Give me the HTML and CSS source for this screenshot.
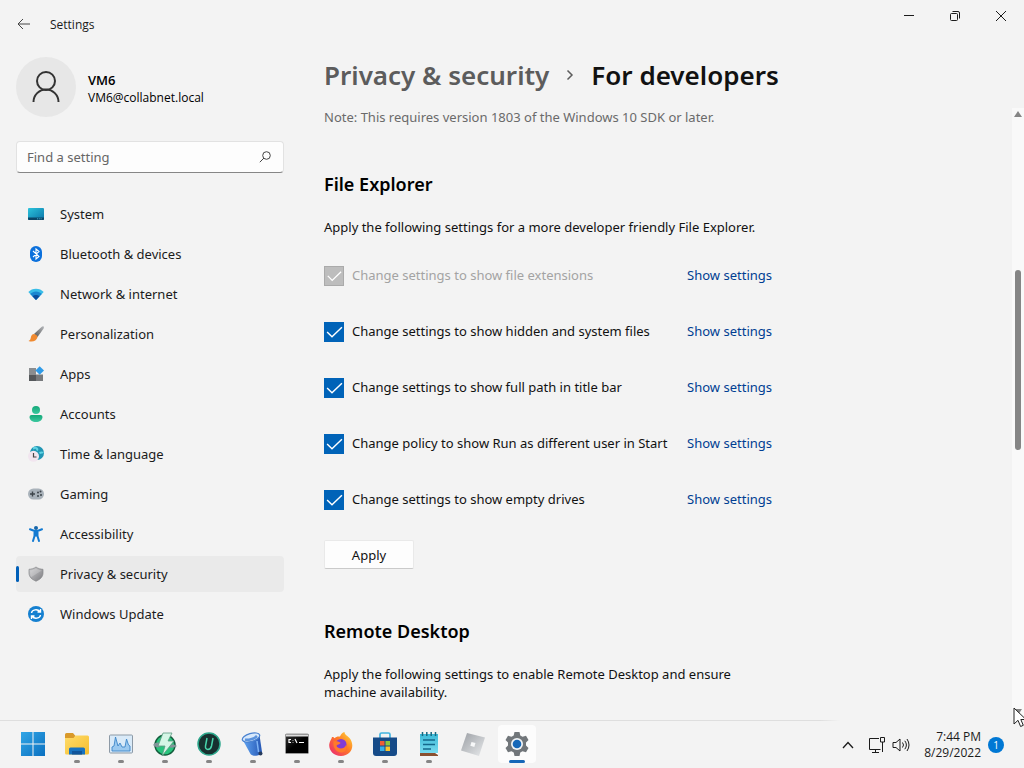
FILE: index.html
```html
<!DOCTYPE html>
<html lang="en">
<head>
<meta charset="utf-8">
<title>Settings</title>
<link rel="stylesheet" href="styles.css">
</head>
<body>
<svg class="defs" aria-hidden="true">
  <defs>
    <linearGradient id="g-sys" x1="0" y1="0" x2="1" y2="1"><stop offset="0" stop-color="#2cc4dc"/><stop offset="1" stop-color="#0a74a8"/></linearGradient>
    <linearGradient id="g-win" x1="0" y1="0" x2="1" y2="1"><stop offset="0" stop-color="#32a6e6"/><stop offset="1" stop-color="#0a70c0"/></linearGradient>
    <linearGradient id="g-brush" x1="0" y1="1" x2="1" y2="0"><stop offset="0" stop-color="#555"/><stop offset="1" stop-color="#b5b8bc"/></linearGradient>
    <linearGradient id="g-acc" x1="0" y1="0" x2="0" y2="1"><stop offset="0" stop-color="#14a878"/><stop offset="1" stop-color="#3cc8a0"/></linearGradient>
    <linearGradient id="g-shield" x1="0" y1="0" x2="1" y2="1"><stop offset="0" stop-color="#cfcfd1"/><stop offset="1" stop-color="#7b7b7f"/></linearGradient>
    <linearGradient id="g-folder" x1="0" y1="0" x2="1" y2="1"><stop offset="0" stop-color="#ffdc6a"/><stop offset="1" stop-color="#f5bd2e"/></linearGradient>
    <linearGradient id="g-fox" x1="1" y1="0" x2="0" y2="1"><stop offset="0" stop-color="#ffe23c"/><stop offset=".45" stop-color="#ff7a24"/><stop offset="1" stop-color="#e9207c"/></linearGradient>
    <linearGradient id="g-bin" x1="0" y1="0" x2="1" y2="0"><stop offset="0" stop-color="#62a6f4"/><stop offset="1" stop-color="#2557b4"/></linearGradient>
    <linearGradient id="g-rob" x1="0" y1="0" x2="1" y2="1"><stop offset="0" stop-color="#9b9fa4"/><stop offset="1" stop-color="#e8eaec"/></linearGradient>
    <linearGradient id="g-note" x1="0" y1="0" x2="0" y2="1"><stop offset="0" stop-color="#3cbad8"/><stop offset="1" stop-color="#7cdcf0"/></linearGradient>
    <linearGradient id="g-cmd" x1="0" y1="0" x2="1" y2="1"><stop offset="0" stop-color="#3a3a3a"/><stop offset=".5" stop-color="#000"/></linearGradient>
  </defs>
</svg>

<header class="titlebar">
  <button class="back" aria-label="Back"><svg width="14" height="12" viewBox="0 0 14 12"><path d="M13 6H1M6 1 1 6l5 5" class="line"/></svg></button>
  <span class="title">Settings</span>
  <div class="window-buttons">
    <button aria-label="Minimize"><svg width="12" height="12" viewBox="0 0 12 12"><path d="M1 5.500H11" class="line dark"/></svg></button>
    <button aria-label="Restore"><svg width="12" height="12" viewBox="0 0 12 12"><rect x="1.500" y="3.500" width="7" height="7" rx="1" class="line dark"/><path d="M3.500 1.500H9a1.500 1.500 0 0 1 1.500 1.500V8.500" class="line dark"/></svg></button>
    <button aria-label="Close"><svg width="12" height="12" viewBox="0 0 12 12"><path d="m1 1 10 10M11 1 1 11" class="line dark"/></svg></button>
  </div>
</header>

<div class="window">
  <aside class="sidebar">
    <div class="account">
      <div class="avatar"><svg width="28" height="32" viewBox="0 0 28 32"><circle cx="14" cy="10" r="9" class="person"/><path d="M1.500 31a12.500 12.500 0 0 1 25 0" class="person"/></svg></div>
      <div class="who"><strong>VM6</strong><span>VM6@collabnet.local</span></div>
    </div>
    <label class="search">
      <input type="text" placeholder="Find a setting" aria-label="Find a setting">
      <svg width="12" height="12" viewBox="0 0 12 12"><circle cx="7.500" cy="4.500" r="3.800" class="line"/><path d="M5 7 .8 11.200" class="line"/></svg>
    </label>
    <nav class="nav">
      <a href="#"><svg class="icon" viewBox="0 0 16 16"><rect y="2" width="16" height="12" rx="1" fill="url(#g-sys)"/><path d="M0 11.500h16V13a1 1 0 0 1-1 1H1a1 1 0 0 1-1-1z" fill="#0b4668"/><path d="M9 12.800h5" stroke="#4cc2e0" stroke-width=".8" stroke-dasharray="1 .8"/></svg>System</a>
      <a href="#"><svg class="icon" viewBox="0 0 16 16"><rect x="2" width="12" height="16" rx="6" fill="#0b70dc"/><path d="m5 5 6 5.500L8 13V3l3 2.500L5 11" fill="none" stroke="#fff" stroke-width="1.100"/></svg>Bluetooth &amp; devices</a>
      <a href="#"><svg class="icon" viewBox="0 0 16 16"><path d="M.3 6C4 1.500 12 1.500 15.700 6L8 14z" fill="#38bde8"/><path d="M2.200 8C5.500 4.500 10.500 4.500 13.800 8L8 14z" fill="#1986d0"/><path d="M4.500 10.300c2-1.800 5-1.800 7 0L8 14z" fill="#0a4c9c"/></svg>Network &amp; internet</a>
      <a href="#"><svg class="icon" viewBox="0 0 16 16"><path d="M15.600.5c.6.600.3 1.500-.1 2.200L9.500 11 6 8l7.500-7c.7-.6 1.500-1 2.100-.5z" fill="url(#g-brush)"/><path d="M6 8c2 .3 3.300 1.500 3.500 3.200C8.500 15 4.500 16.500.5 15c2-.8 2-2 2.500-4.200C3.400 9.300 4.500 8 6 8z" fill="#f08a30"/></svg>Personalization</a>
      <a href="#"><svg class="icon" viewBox="0 0 16 16"><path d="M1 2h7v6.500H1z" fill="#8a8d90"/><path d="M1 8.500h7V15H1z" fill="#55585b"/><path d="M8 8.500h7V15H8z" fill="#777a7d"/><path d="m11.700.2 4.300 4.300-4.300 4.300L7.400 4.500z" fill="#2f9be8"/></svg>Apps</a>
      <a href="#"><svg class="icon" viewBox="0 0 16 16"><circle cx="8" cy="4" r="4" fill="url(#g-acc)"/><path d="M3.500 9h9a2 2 0 0 1 2 2c0 3-3 5-6.500 5s-6.500-2-6.500-5a2 2 0 0 1 2-2z" fill="url(#g-acc)"/></svg>Accounts</a>
      <a href="#"><svg class="icon" viewBox="0 0 16 16"><circle cx="9" cy="7" r="7" fill="#2196b4"/><path d="M5 2.500c3-1.500 5 0 4 2M11.500 7c2-1 3 0 3.500-1" fill="none" stroke="#60d4e4" stroke-width="2"/><circle cx="5.500" cy="10.300" r="5.500" fill="#f1e5ef"/><path d="M5.500 7V11H8.500" fill="none" stroke="#444" stroke-width="1.200"/></svg>Time &amp; language</a>
      <a href="#"><svg class="icon" viewBox="0 0 16 16"><rect y="2.500" width="16" height="11" rx="5.500" fill="#a9b2ba"/><path d="M4.500 5.500v5M2 8h5" stroke="#3d444a" stroke-width="1.400"/><circle cx="10" cy="6.500" r="1" fill="#3d444a"/><circle cx="12.500" cy="5.500" r="1" fill="#3d444a"/><circle cx="10" cy="10" r="1" fill="#3d444a"/><circle cx="13" cy="9" r="1" fill="#3d444a"/></svg>Gaming</a>
      <a href="#"><svg class="icon" viewBox="0 0 16 16"><circle cx="8" cy="2" r="2" fill="#1666aa"/><path d="M2 3.200 6.500 5h3L14 3.200M6.500 5v5L5 15M9.500 5v5l1.500 5" fill="none" stroke="#127ad2" stroke-width="2" stroke-linecap="round"/><path d="M6 5h4v5.500H6z" fill="#127ad2"/></svg>Accessibility</a>
      <a href="#" class="current" aria-current="page"><svg class="icon" viewBox="0 0 16 16"><path d="M8 1c2 1.500 4.500 2.200 7 2.300V7c0 4-3 6.500-7 8.200C4 13.500 1 11 1 7V3.300C3.500 3.200 6 2.500 8 1z" fill="url(#g-shield)" stroke="#85868a" stroke-width=".7"/><path d="M8 2.500c2 1.200 3.800 1.700 5.800 1.900L3 11.300C2 9 2.200 7 2.200 4.400 4.200 4.200 6 3.700 8 2.500z" fill="#fff" opacity=".22"/></svg>Privacy &amp; security</a>
      <a href="#"><svg class="icon" viewBox="0 0 16 16"><circle cx="8" cy="8" r="8" fill="#1580d0"/><path d="M3.500 7C4 3.500 9.500 2.500 12 5.700M12.500 3v3h-3M12.500 9C12 12.500 6.500 13.500 4 10.300M3.500 13v-3h3" fill="none" stroke="#fff" stroke-width="1.400"/></svg>Windows Update</a>
    </nav>
  </aside>

  <main class="content">
    <h1><a href="#">Privacy &amp; security</a><svg width="8" height="12" viewBox="0 0 8 12"><path d="m1.500 1.500 4.500 4.500-4.500 4.500"/></svg><span>For developers</span></h1>
    <p class="note">Note: This requires version 1803 of the Windows 10 SDK or later.</p>
    <section>
      <h2>File Explorer</h2>
      <p>Apply the following settings for a more developer friendly File Explorer.</p>
      <div class="options">
        <div class="option"><label><input type="checkbox" checked disabled>Change settings to show file extensions</label><a href="#">Show settings</a></div>
        <div class="option"><label><input type="checkbox" checked>Change settings to show hidden and system files</label><a href="#">Show settings</a></div>
        <div class="option"><label><input type="checkbox" checked>Change settings to show full path in title bar</label><a href="#">Show settings</a></div>
        <div class="option"><label><input type="checkbox" checked>Change policy to show Run as different user in Start</label><a href="#">Show settings</a></div>
        <div class="option"><label><input type="checkbox" checked>Change settings to show empty drives</label><a href="#">Show settings</a></div>
      </div>
      <button class="apply">Apply</button>
    </section>
    <section class="remote">
      <h2>Remote Desktop</h2>
      <p>Apply the following settings to enable Remote Desktop and ensure machine availability.</p>
    </section>
  </main>

  <div class="scrollbar">
    <svg width="10" height="8" viewBox="0 0 10 8"><path d="M5 1 9 7H1z"/></svg>
    <div class="track"><div class="before"></div><div class="thumb"></div><div class="after"></div></div>
    <svg width="10" height="8" viewBox="0 0 10 8"><path d="M5 7 1 1h8z"/></svg>
  </div>
</div>

<footer class="taskbar">
  <div class="apps">
    <button aria-label="Start"><svg viewBox="0 0 24 24"><path d="M0 0h11.500v11.500H0zM12.500 0H24v11.500H12.500zM0 12.500h11.500V24H0zM12.500 12.500H24V24H12.500z" fill="url(#g-win)"/></svg></button>
    <button aria-label="File Explorer" class="open"><svg viewBox="0 0 24 24"><path d="M0 2.500A1.500 1.500 0 0 1 1.500 1H8l2.500 3v2H0z" fill="#d9992a"/><path d="M0 6h8.500l2-2.500h12A1.500 1.500 0 0 1 24 5v16a1.500 1.500 0 0 1-1.500 1.500h-21A1.500 1.500 0 0 1 0 21z" fill="url(#g-folder)"/><path d="M4 22.500V17a1.500 1.500 0 0 1 1.500-1.500h13A1.500 1.500 0 0 1 20 17v5.500z" fill="#1873c0"/><path d="M7 19h10v3.500H7z" fill="#11559a"/></svg></button>
    <button aria-label="Performance Monitor" class="open"><svg viewBox="0 0 24 24"><rect x=".5" y="3" width="23" height="18" rx="1" fill="#d9eaf8" stroke="#8d9aa6"/><path d="M3 19v-4l2-1 1.500-9L9 14l2-3 2 4h3l1.500-8 2 6 1.500 1v5z" fill="#9bc9ef" stroke="#3c86c8" stroke-width=".9"/></svg></button>
    <button aria-label="Booster" class="open"><svg viewBox="0 0 24 24"><circle cx="12" cy="13" r="10" fill="#27c47c" stroke="#125c3c" stroke-width="1.500"/><path d="M0 13c3-3 6-3 8-1l8 2c3-2 5-2 8 0-3 2-6 2-8 1l-8-1c-2 2-5 2-8-1z" fill="#83949a"/><path d="M10 1h9l-4 8h6L9 24l3-10H5z" fill="#d5f6e6" stroke="#5b9a80" stroke-width=".8"/></svg></button>
    <button aria-label="Uninstaller" class="open"><svg viewBox="0 0 24 24"><circle cx="12" cy="12" r="11" fill="#17302f" stroke="#2ca78c" stroke-width="1.500"/><path d="M10 6 8.500 14c-.8 4.500 5 4.500 6 0L16 6" fill="none" stroke="#48d4ac" stroke-width="1.500"/></svg></button>
    <button aria-label="Recycle tool" class="open"><svg viewBox="0 0 24 24"><path d="M1.500 7.500 18.500 3 21 20c-1 4-9.500 5-11.500 2z" fill="url(#g-bin)"/><ellipse cx="10" cy="5.500" rx="9" ry="4" transform="rotate(-16 10 5.500)" fill="#d7e8fb" stroke="#4a82d0" stroke-width="1.200"/><path d="M4 7.500c3 1 9-.5 12-3.500" stroke="#5a92dc" stroke-width="2.500" fill="none"/><path d="m16 9 1.500 11" stroke="#7fb4f4" stroke-width="1.500"/><circle cx="19.500" cy="21.500" r="2" fill="#263b5c"/></svg></button>
    <button aria-label="Command Prompt" class="open"><svg viewBox="0 0 24 24"><rect x=".5" y="2" width="23" height="19.500" rx="1" fill="url(#g-cmd)" stroke="#999"/><path d="M1 2.500h22v2H1z" fill="#ddd"/><path d="M6 7.500H4v3h2M8 8v.6M8 10v.6M10 7l2 4M14 10.500h5" fill="none" stroke="#fff" stroke-width="1.200"/></svg></button>
    <button aria-label="Firefox" class="open"><svg viewBox="0 0 24 24"><path d="M3 5c1-.2 2 .4 2.500 1.200C7 4.500 9 4.200 11 4.500 12 2 13.500.5 15.500 0c0 3 3 3.500 5 6 6 7.500 2 18-8.500 18C4 24-.5 18 .3 12 .7 9 2.500 7.500 3 5z" fill="url(#g-fox)"/><circle cx="12" cy="12.500" r="5.500" fill="#803bd6"/><path d="M4.500 9.500c2.500-1.200 4.500 0 7 1.200-.5 2-3.500 1.300-4 3.300 1.500 3.500 8 3.500 9.500-1 1.500 5-1.500 7.500-5 7.500s-8.500-3.500-7.500-11z" fill="#ff7a2a"/></svg></button>
    <button aria-label="Microsoft Store" class="open"><svg viewBox="0 0 24 24"><path d="M7 6V2.500A1.500 1.500 0 0 1 8.500 1h7A1.500 1.500 0 0 1 17 2.500V6" fill="none" stroke="#42b4e0" stroke-width="1.700"/><path d="M0 5.500h24V21a3 3 0 0 1-3 3H3a3 3 0 0 1-3-3z" fill="#164b88"/><path d="M7 9h4.500v4.500H7z" fill="#f05c35"/><path d="M12.500 9H17v4.500h-4.500z" fill="#8cc63e"/><path d="M7 14.500h4.500V19H7z" fill="#36afe8"/><path d="M12.500 14.500H17V19h-4.500z" fill="#fbc52d"/></svg></button>
    <button aria-label="Notepad" class="open"><svg viewBox="0 0 24 24"><path d="M3 2h18v20H3z" fill="url(#g-note)"/><path d="M3 21h18v3H3z" fill="#8a5030"/><path d="M3 21h15l3 2v-2z" fill="#fff"/><path d="M5.500 0v4M9.800 0v4M14.200 0v4M18.500 0v4" stroke="#176780" stroke-width="1.500"/><path d="M6 8h12M6 12.500h12M6 17h8" stroke="#14688c" stroke-width="1.700"/></svg></button>
    <button aria-label="Roblox Studio"><svg viewBox="0 0 24 24"><path d="M6 1 24 5.500 18 24 0 18.500z" fill="url(#g-rob)"/><path d="m10.500 10 4 1-1.200 4-4-1.200z" fill="#f7f8f9"/></svg></button>
    <button aria-label="Settings" class="active"><svg viewBox="0 0 24 24"><path d="m9.500 0h5l.8 3.500 2.200 1.200 3.500-1 2.500 4.200L21 10.600v2.800l2.500 2.700-2.500 4.200-3.500-1-2.200 1.200-.8 3.500h-5l-.8-3.500-2.200-1.200-3.500 1L.5 16.100 3 13.400v-2.800L.5 7.900 3 3.700l3.500 1 2.200-1.200z" fill="#71767a"/><circle cx="12" cy="12" r="6" fill="#f0f3f5"/><circle cx="12" cy="12" r="4.300" fill="#1567b8"/></svg></button>
  </div>
  <div class="tray">
    <button aria-label="Show hidden icons"><svg width="12" height="8" viewBox="0 0 12 8"><path d="m1 7 5-5.500L11 7" class="line tick"/></svg></button>
    <button class="status" aria-label="Network and volume">
      <svg width="18" height="18" viewBox="0 0 18 18"><path d="M11 2.500H1.500v11h11M7.500 14v2.500M4 16.500h7M12.500 1.500h4v4.500h-4zM14.500 6v10" class="line dark"/></svg>
      <svg width="18" height="16" viewBox="0 0 18 16"><path d="M1 5.500h3L8 2v12l-4-3.500H1zM10.500 5.500q2 2.500 0 5M12.800 3.800q3.200 4.200 0 8.400M15 2q4 6 0 12" class="line dark"/></svg>
    </button>
    <div class="clock"><time>7:44 PM</time><time>8/29/2022</time></div>
    <span class="badge">1</span>
  </div>
</footer>
<svg class="cursor" width="14" height="21" viewBox="0 0 14 21" aria-hidden="true"><path d="M1 1v16l4-3.700L7.600 19.500l2.700-1.200L7.800 12.500h5.200z" fill="#fff" stroke="#222"/></svg>
</body>
</html>
```
FILE: styles.css
```css
* { box-sizing: border-box; }

body {
  margin: 0;
  height: 100vh;
  overflow: hidden;
  display: flex;
  flex-direction: column;
  background: #f3f3f3;
  color: #1b1b1b;
  font: 13px/18px "Noto Sans", "Open Sans", sans-serif;
}

h1, h2, p { margin: 0; }
a { color: inherit; text-decoration: none; }
button {
  border: 0;
  padding: 0;
  background: none;
  color: inherit;
  font: inherit;
}
svg { display: block; flex: none; }
.defs { position: absolute; width: 0; height: 0; }
.line { fill: none; stroke: #444; stroke-width: 1; }
.line.dark { stroke: #1b1b1b; }
.line.tick { stroke: #1b1b1b; stroke-width: 1.3; }

.titlebar {
  display: flex;
  align-items: center;
  height: 48px;
  flex: none;
  padding-left: 17px;
}
.title {
  margin-left: 19px;
  padding-top: 2px;
  font-family: "Open Sans", sans-serif;
  font-size: 12px;
}
.window-buttons { display: flex; align-self: flex-start; margin-left: auto; }
.window-buttons button {
  display: grid;
  place-items: center;
  width: 46px;
  height: 32px;
}

.window { flex: 1; min-height: 0; display: flex; }

.sidebar { flex: none; width: 284px; padding: 9px 0 0 16px; }
.account { display: flex; align-items: center; gap: 12px; }
.avatar {
  display: grid;
  place-items: center;
  width: 60px;
  height: 60px;
  border-radius: 50%;
  background: #e7e7e7;
}
.person { fill: none; stroke: #333; stroke-width: 2; }
.who {
  display: flex;
  flex-direction: column;
  padding-top: 4px;
  color: #000;
  font-family: "Open Sans", sans-serif;
  font-size: 12px;
}
.who strong { font-size: 13px; font-weight: 600; }

.search {
  display: flex;
  align-items: center;
  height: 32px;
  margin-top: 24px;
  padding: 0 12px 0 10px;
  border: 1px solid #e2e2e2;
  border-bottom-color: #868686;
  border-radius: 4px;
  background: #fdfdfd;
}
.search input {
  flex: 1;
  min-width: 0;
  padding: 0;
  border: 0;
  outline: 0;
  background: none;
  font: inherit;
}
.search input::placeholder { color: #666; opacity: 1; }

.nav { display: flex; flex-direction: column; gap: 4px; margin-top: 23px; }
.nav a {
  display: flex;
  align-items: center;
  gap: 16px;
  height: 36px;
  padding-left: 12px;
  border-radius: 4px;
}
.nav .icon { width: 16px; height: 16px; }
.nav .current { position: relative; background: #eaeaea; }
.nav .current::before {
  content: "";
  position: absolute;
  left: 0;
  top: 10px;
  width: 3px;
  height: 16px;
  border-radius: 2px;
  background: #005fb8;
}

.content {
  flex: 1;
  min-width: 0;
  overflow: hidden;
  padding: 9px 24px 0 40px;
  color: #111;
}
.content h1 {
  display: flex;
  align-items: center;
  font-size: 26px;
  line-height: 36px;
  font-weight: 600;
}
.content h1 a { color: #5c5c5c; }
.content h1 svg { margin: 0 17px; }
.content h1 path { fill: none; stroke: #5c5c5c; stroke-width: 1.5; }
.note { margin-top: 15px; color: #6a6a6a; }
.content h2 {
  margin-top: 44px;
  color: #000;
  font-size: 18px;
  line-height: 28px;
  font-weight: 600;
}
.content section { max-width: 448px; }
.content section p { margin-top: 20px; }
.content .remote h2 { margin-top: 48px; }

.options { display: grid; gap: 36px; margin-top: 30px; }
.option { display: flex; align-items: flex-start; justify-content: space-between; height: 20px; }
.option label { display: flex; align-items: flex-start; gap: 8px; white-space: nowrap; }
.option label:has(:disabled) { color: #a3a3a3; }
.option a { color: #003e92; white-space: nowrap; }
.option input {
  appearance: none;
  display: block;
  width: 20px;
  height: 20px;
  margin: 0;
  background: #0063b8;
}
.option input:checked::after {
  content: "";
  display: block;
  height: 100%;
  background: #fff;
  clip-path: polygon(13% 52%, 18% 47%, 40% 69%, 87% 24%, 92% 29%, 40% 79%);
}
.option input:disabled { background: #bdbdbd; border: 1px solid #aaa; }

.apply {
  display: block;
  width: 90px;
  height: 29px;
  margin-top: 30px;
  border: 1px solid #e9e9e9;
  border-bottom-color: #cacaca;
  border-radius: 2px;
  background: #fdfdfd;
}

.scrollbar {
  flex: none;
  display: flex;
  flex-direction: column;
  align-items: center;
  width: 12px;
  margin-top: 60px;
  padding: 2px 0 4px;
  background: #f9f9f9;
}
.scrollbar path { fill: #858585; }
.track { flex: 1; display: flex; flex-direction: column; }
.before { flex: 152; }
.thumb { flex: 179; width: 6px; border-radius: 3px; background: #858585; }
.after { flex: 258; }

.taskbar {
  flex: none;
  display: flex;
  justify-content: space-between;
  height: 48px;
  padding: 0 20px 0 11px;
  border-top: 1px solid;
  border-image: linear-gradient(90deg, #dedede 80%, #f3f3f3 82%) 1;
}
.apps { display: flex; }
.apps button {
  display: flex;
  flex-direction: column;
  align-items: center;
  width: 44px;
  padding-top: 11px;
}
.apps svg { width: 24px; height: 24px; }
.apps .open::after, .apps .active::after {
  content: "";
  width: 6px;
  height: 3px;
  margin-top: 4px;
  border-radius: 2px;
  background: #858585;
}
.apps .active {
  width: 38px;
  height: 38px;
  margin: 4px 3px;
  padding-top: 7px;
  border-radius: 4px;
  background: #fcfcfc;
}
.apps .active::after { width: 16px; background: #1567b8; }

.tray {
  display: flex;
  align-items: center;
  font-family: "Open Sans", sans-serif;
  font-size: 12px;
  line-height: 16px;
}
.status { display: flex; align-items: center; gap: 6px; margin-left: 14px; }
.clock { display: flex; flex-direction: column; align-items: flex-end; margin-left: 14px; }
.badge {
  display: grid;
  place-items: center;
  width: 16px;
  height: 16px;
  margin-left: 7px;
  border-radius: 50%;
  background: #0078d4;
  color: #fff;
  font-size: 10px;
}
.cursor { position: absolute; right: -3px; bottom: 40px; }
```
